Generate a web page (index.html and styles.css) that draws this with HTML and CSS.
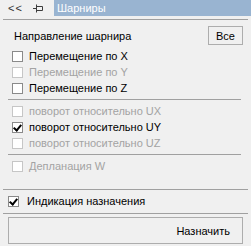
FILE: index.html
```html
<!DOCTYPE html>
<html lang="ru">
    <head>
        <meta charset="utf-8">
        <title>Шарниры</title>
        <link rel="stylesheet" href="styles.css">
    </head>
    <body>
        <div class="header">
            <div class="tools">
                <span class="back">&lt;&lt;</span>
                <svg class="pin" width="11" height="9" viewBox="0 0 11 9">
                    <path d="M0 4.5H3.5M3.5 0.5V8.5M3.5 2.5H9.5V6.5H3.5" fill="none" stroke="#3c3c3c" stroke-width="1"/>
                </svg>
            </div>
            <div class="title">Шарниры</div>
        </div>
        <div class="sep wide"></div>

        <div class="dir-row">
            <span class="dir-label">Направление шарнира</span>
            <button class="btn btn-all">Все</button>
        </div>

        <div class="group">
            <div class="check"><span class="box"></span><span>Перемещение по X</span></div>
            <div class="check off"><span class="box"></span><span>Перемещение по Y</span></div>
            <div class="check"><span class="box"></span><span>Перемещение по Z</span></div>
        </div>
        <div class="sep inner"></div>

        <div class="group">
            <div class="check off"><span class="box"></span><span>поворот относительно UX</span></div>
            <div class="check"><span class="box on"></span><span>поворот относительно UY</span></div>
            <div class="check off"><span class="box"></span><span>поворот относительно UZ</span></div>
        </div>
        <div class="sep inner"></div>

        <div class="group last">
            <div class="check off"><span class="box"></span><span>Депланация W</span></div>
        </div>
        <div class="sep wide"></div>

        <div class="check indic"><span class="box on"></span><span>Индикация назначения</span></div>
        <div class="sep wide low"></div>

        <div class="bottom">
            <button class="btn btn-assign">Назначить</button>
        </div>
    </body>
</html>
```

FILE: styles.css
```css
body {
    margin: 0;
    width: 251px;
    height: 246px;
    background-color: #f0f0f0;
    font-family: "Liberation Sans", Arial, sans-serif;
    font-size: 11px;
    color: #000;
    overflow: hidden;
}
.header {
    display: flex;
    height: 16px;
}
.tools {
    width: 54px;
    display: flex;
    align-items: center;
}
.back {
    margin-left: 8px;
    width: 24px;
    color: #333;
    letter-spacing: 1px;
}
.pin {
    margin-left: 1px;
}
.title {
    flex: 1;
    background-color: #99b4d1;
    color: #fff;
    padding-left: 3px;
    line-height: 16px;
}
.sep {
    height: 1px;
    background-color: #a0a0a0;
}
.sep.wide {
    margin: 3px 3px 0 3px;
}
.sep.wide.low {
    margin-top: 4px;
}
.sep.inner {
    margin: 3px 10px 0 8px;
}
.dir-row {
    display: flex;
    justify-content: space-between;
    align-items: center;
    padding: 6px 8px 0 14px;
}
.btn {
    font-family: inherit;
    font-size: 11px;
    background-color: #f0f0f0;
    border: 1px solid #adadad;
    color: #000;
    padding: 0;
}
.btn-all {
    width: 35px;
    height: 19px;
}
.group {
    padding-top: 3px;
}
.group.last {
    padding-bottom: 12px;
}
.check {
    display: flex;
    align-items: center;
    height: 16px;
    padding-left: 12px;
}
.check .box {
    width: 9px;
    height: 9px;
    border: 1px solid #8a8a8a;
    background-color: #fff;
    margin-right: 6px;
    position: relative;
}
.check.off {
    color: #a3a3a3;
}
.check.off .box {
    border-color: #c6c6c6;
}
.box.on::after {
    content: "";
    position: absolute;
    left: 2px;
    top: 0px;
    width: 3px;
    height: 6px;
    border-right: 2px solid #000;
    border-bottom: 2px solid #000;
    transform: rotate(40deg);
}
.check.indic {
    padding-left: 8px;
    margin-top: 3px;
}
.check.indic .box {
    margin-right: 8px;
}
.bottom {
    padding: 3px 8px 0 8px;
}
.btn-assign {
    width: 235px;
    height: 27px;
    text-align: right;
    padding-right: 12px;
}
```
